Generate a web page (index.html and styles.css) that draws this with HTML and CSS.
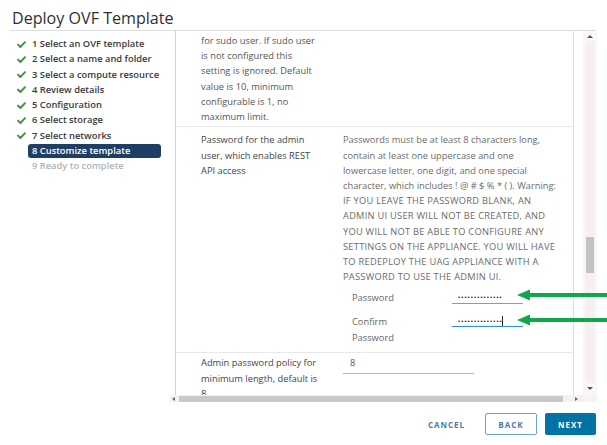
FILE: index.html
```html
<!DOCTYPE html>
<html lang="en">
<head>
<meta charset="utf-8">
<title>Deploy OVF Template</title>
<link rel="stylesheet" href="styles.css">
</head>
<body>
<div class="dialog">
  <header class="head"><h1 class="title">Deploy OVF Template</h1></header>
  <div class="main">
    <nav class="steps">
      <ol class="step-list">
        <li class="step done"><svg class="check" viewBox="0 0 9 7"><polyline points="1,3.6 3.4,6 8,1.2"/></svg><span class="step-label">1 Select an OVF template</span></li>
        <li class="step done"><svg class="check" viewBox="0 0 9 7"><polyline points="1,3.6 3.4,6 8,1.2"/></svg><span class="step-label">2 Select a name and folder</span></li>
        <li class="step done"><svg class="check" viewBox="0 0 9 7"><polyline points="1,3.6 3.4,6 8,1.2"/></svg><span class="step-label">3 Select a compute resource</span></li>
        <li class="step done"><svg class="check" viewBox="0 0 9 7"><polyline points="1,3.6 3.4,6 8,1.2"/></svg><span class="step-label">4 Review details</span></li>
        <li class="step done"><svg class="check" viewBox="0 0 9 7"><polyline points="1,3.6 3.4,6 8,1.2"/></svg><span class="step-label">5 Configuration</span></li>
        <li class="step done"><svg class="check" viewBox="0 0 9 7"><polyline points="1,3.6 3.4,6 8,1.2"/></svg><span class="step-label">6 Select storage</span></li>
        <li class="step done"><svg class="check" viewBox="0 0 9 7"><polyline points="1,3.6 3.4,6 8,1.2"/></svg><span class="step-label">7 Select networks</span></li>
        <li class="step current"><span class="check-slot"></span><span class="step-label">8 Customize template</span></li>
        <li class="step todo"><span class="check-slot"></span><span class="step-label">9 Ready to complete</span></li>
      </ol>
    </nav>
    <div class="viewport">
      <div class="form">
        <div class="row row-first">
          <div class="label">for sudo user. If sudo user<br>is not configured this<br>setting is ignored. Default<br>value is 10, minimum<br>configurable is 1, no<br>maximum limit.</div>
        </div>
        <div class="row row-pass">
          <div class="label">Password for the admin<br>user, which enables REST<br>API access</div>
          <div class="value">
            <p class="desc">Passwords must be at least 8 characters long,<br>contain at least one uppercase and one<br>lowercase letter, one digit, and one special<br>character, which includes ! @ # $ % * ( ). Warning:<br><span class="caps">IF YOU LEAVE THE PASSWORD BLANK, AN<br>ADMIN UI USER WILL NOT BE CREATED, AND<br>YOU WILL NOT BE ABLE TO CONFIGURE ANY<br>SETTINGS ON THE APPLIANCE. YOU WILL HAVE<br>TO REDEPLOY THE UAG APPLIANCE WITH A<br>PASSWORD TO USE THE ADMIN UI.</span></p>
            <div class="pw-grid">
              <span class="pw-label">Password</span>
              <span class="pw-input"><span class="dots">••••••••••••••</span></span>
              <span class="pw-label">Confirm<br>Password</span>
              <span class="pw-input pw-focus"><span class="dots">••••••••••••••</span><span class="caret"></span></span>
            </div>
          </div>
        </div>
        <div class="row row-last">
          <div class="label">Admin password policy for<br>minimum length, default is<br>8</div>
          <div class="value">
            <div class="text-input">8</div>
          </div>
        </div>
      </div>
    </div>
    <div class="vscroll">
      <span class="arr arr-up"></span>
      <div class="vtrack"><div class="vthumb"></div></div>
      <span class="arr arr-down"></span>
    </div>
  </div>
  <div class="hscroll">
    <span class="arr arr-left"></span>
    <div class="hthumb"></div>
    <span class="arr arr-right"></span>
    <span class="corner"></span>
  </div>
  <footer class="foot">
    <button class="btn btn-flat">CANCEL</button>
    <button class="btn btn-outline">BACK</button>
    <button class="btn btn-primary">NEXT</button>
  </footer>
  <svg class="arrows" viewBox="0 0 93 42" width="93" height="42">
    <polygon points="3,9 16,3.5 16,14.5"/>
    <rect x="15" y="7" width="78" height="4"/>
    <polygon points="3,34 16,28.5 16,39.5"/>
    <rect x="15" y="32" width="78" height="4"/>
  </svg>
</div>
</body>
</html>
```
FILE: styles.css
```css
* { box-sizing: border-box; }
html, body { margin: 0; padding: 0; background: #fff; }
body {
  width: 607px;
  height: 445px;
  overflow: hidden;
  font-family: "Open Sans", "Liberation Sans", sans-serif;
  color: #444;
}
.dialog { position: relative; width: 607px; height: 445px; }

.head {
  height: 31px;
  margin: 0 12px 0 10px;
  border-bottom: 1px solid #dcdcdc;
}
.title {
  margin: 0;
  padding: 8px 0 0 2px;
  font-size: 16.1px;
  font-weight: 400;
  line-height: 20px;
  color: #303030;
}

.main { display: flex; width: 597px; height: 364px; }

.steps {
  width: 176px;
  flex: none;
  border-right: 1px solid #d2d2d2;
  padding: 5.4px 0 0 14px;
}
.step-list { list-style: none; margin: 0; padding: 0; }
.step {
  display: flex;
  align-items: center;
  height: 15.25px;
  font-size: 9.35px;
  font-weight: 600;
  color: #3a3a3a;
}
.check {
  width: 9px;
  height: 7px;
  flex: none;
  margin: 0 2px 0 3px;
  fill: none;
  stroke: #3e9440;
  stroke-width: 1.9;
  stroke-linecap: round;
  stroke-linejoin: round;
}
.check-slot { width: 14px; flex: none; }
.step-label { padding: 0 4px; line-height: 14px; white-space: nowrap; }
.step.current .step-label {
  width: 133px;
  background: #1f3e63;
  color: #fff;
  border-radius: 3px;
}
.step.todo .step-label { color: #b3b3b3; }

.viewport { width: 407px; height: 364px; overflow: hidden; flex: none; }
.form {
  width: 398px;
  min-height: 100%;
  border-right: 1px solid #dedede;
}
.row {
  display: flex;
  padding-left: 25px;
  border-bottom: 1px solid #e8e8e8;
  font-size: 9.3px;
  line-height: 15.2px;
}
.row-first { padding-top: 2px; padding-bottom: 2px; }
.row-pass { padding-top: 5.2px; padding-bottom: 7.2px; }
.row-last { padding-top: 2.4px; padding-bottom: 20px; }
.label { width: 142px; flex: none; white-space: nowrap; color: #444; }
.row-first .label { color: #555; }
.value { flex: 1; }
.desc { margin: 0; color: #6b6b6b; white-space: nowrap; }
.caps { letter-spacing: 0.25px; }

.pw-grid {
  display: grid;
  grid-template-columns: 100px 71px;
  row-gap: 8.8px;
  margin: 6px 0 0 9px;
  color: #666;
}
.pw-label { line-height: 15.2px; }
.pw-input {
  height: 14px;
  padding-left: 6px;
  border-bottom: 1px solid #9a9a9a;
  line-height: 11px;
}
.pw-focus { height: 13px; border-bottom-color: #2d8ed3; }
.dots {
  font-family: "Liberation Sans", sans-serif;
  font-size: 6px;
  letter-spacing: 1.1px;
  color: #222;
}
.caret {
  display: inline-block;
  width: 1px;
  height: 10px;
  margin-left: -1px;
  background: #222;
  vertical-align: -3px;
}
.text-input {
  width: 131px;
  height: 18.6px;
  padding-left: 7px;
  border-bottom: 1px solid #b5b5b5;
  color: #555;
}

.vscroll {
  width: 14px;
  flex: none;
  display: flex;
  flex-direction: column;
  align-items: center;
  background: #fbf7f7;
  padding: 0 2px;
}
.vtrack { flex: 1; width: 10px; background: #f6f0f0; display: flex; justify-content: center; }
.vthumb { width: 8px; height: 36px; margin-top: 196px; background: #c3c3c3; }
.arr { display: block; width: 0; height: 0; border-style: solid; flex: none; }
.arr-up {
  margin: 4px 0 3px;
  border-width: 0 3px 3px 3px;
  border-color: transparent transparent #555 transparent;
}
.arr-down {
  margin: 4px 0 5px;
  border-width: 3px 3px 0 3px;
  border-color: #555 transparent transparent transparent;
}

.hscroll {
  display: flex;
  align-items: center;
  width: 427px;
  height: 7px;
  margin-left: 170px;
  background: #f3f1f1;
}
.arr-left {
  margin: 0 4px 0 2px;
  border-width: 2.5px 3px 2.5px 0;
  border-color: transparent #666 transparent transparent;
}
.hthumb { width: 384px; height: 6px; background: #c8c8c8; }
.arr-right {
  margin: 0 0 0 12px;
  border-width: 2.5px 0 2.5px 3px;
  border-color: transparent transparent transparent #666;
}
.corner { margin-left: auto; width: 14px; height: 7px; background: #f8f3f3; }

.foot {
  display: flex;
  justify-content: flex-end;
  padding: 11px 11px 0 0;
}
.btn {
  height: 22px;
  padding: 0;
  font-family: "Open Sans", "Liberation Sans", sans-serif;
  font-size: 8px;
  font-weight: 700;
  letter-spacing: 1px;
  border-radius: 2px;
  cursor: pointer;
}
.btn-flat {
  width: 51px;
  margin-right: 13px;
  border: none;
  background: transparent;
  color: #3f7eae;
}
.btn-outline {
  width: 52px;
  margin-right: 8px;
  border: 1px solid #6aa4cf;
  background: #fff;
  color: #3f7eae;
}
.btn-primary {
  width: 51px;
  border: none;
  background: #0072a3;
  color: #fff;
}

.arrows {
  position: absolute;
  left: 514px;
  top: 286px;
  fill: #10a64b;
}
```
